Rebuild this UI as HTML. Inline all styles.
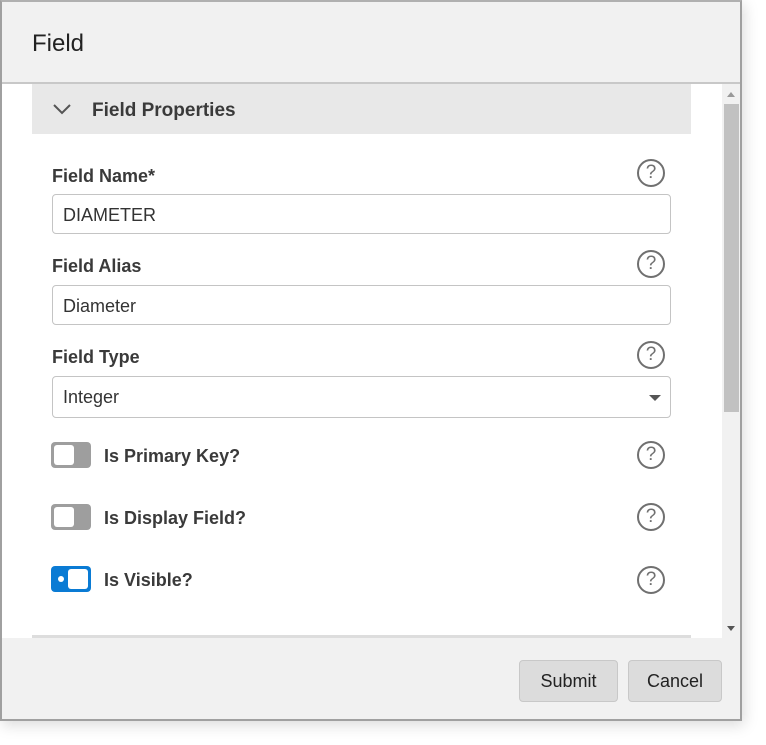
<!DOCTYPE html>
<html><head><style>
*{box-sizing:border-box;margin:0;padding:0}
body{width:766px;height:745px;background:#fff;font-family:"Liberation Sans",sans-serif;position:relative;overflow:hidden;color:#222}
.dlg{position:absolute;left:0;top:0;width:742px;height:721px;border:2px solid #a0a0a0;border-top-color:#b0b0b0;background:#f1f1f1;box-shadow:2px 4px 14px rgba(0,0,0,.15)}
.a{position:absolute}
.lbl{position:absolute;left:52px;font-size:18px;font-weight:bold;color:#3a3a3a}
.inp{position:absolute;left:52px;width:619px;height:40px;border:1px solid #c4c4c4;border-radius:4px;background:#fff;font-size:18px;color:#333;padding:10px 10px}
.q{position:absolute;left:637px;width:28px;height:28px;border:2.5px solid #707070;border-radius:50%;color:#707070;font-size:19px;text-align:center;line-height:23px}
.tg{position:absolute;left:51px;width:40px;height:26px;border-radius:4px;background:#9e9e9e}
.tg i{position:absolute;left:3px;top:3px;width:20px;height:20px;background:#fff;border-radius:3px}
.tg.on{background:#0a7bd4}
.tg.on i{left:17px}
.tg.on b{position:absolute;left:7px;top:10px;width:6px;height:6px;background:#fff;border-radius:50%}
.tl{position:absolute;left:104px;font-size:18px;font-weight:bold;color:#3a3a3a}
.btn{position:absolute;top:660px;height:42px;border:1px solid #c8c8c8;border-radius:4px;background:#dcdcdc;font-size:18px;color:#222;text-align:center;line-height:40px}
</style></head><body>
<div class="dlg"></div>
<div class="a" style="left:32px;top:30px;font-size:24px;color:#222">Field</div>
<div class="a" style="left:2px;top:82px;width:738px;height:2px;background:#c8c8c8"></div>
<div class="a" style="left:2px;top:84px;width:720px;height:554px;background:#fff"></div>
<div class="a" style="left:722px;top:84px;width:18px;height:554px;background:#f1f1f1"></div>
<div class="a" style="left:724px;top:104px;width:15px;height:308px;background:#c1c1c1"></div>
<div class="a" style="left:727px;top:92px;border-left:4px solid transparent;border-right:4px solid transparent;border-bottom:5px solid #999"></div>
<div class="a" style="left:727px;top:626px;border-left:4px solid transparent;border-right:4px solid transparent;border-top:5px solid #555"></div>
<div class="a" style="left:32px;top:84px;width:659px;height:50px;background:#e8e8e8"></div>
<svg class="a" style="left:52px;top:102px" width="20" height="14"><path d="M2 3 L10 11 L18 3" stroke="#555" stroke-width="2" fill="none"/></svg>
<div class="a" style="left:92px;top:100px;font-size:19px;font-weight:bold;color:#3a3a3a">Field Properties</div>
<div class="lbl" style="top:166px">Field Name*</div>
<div class="q" style="top:159px">?</div>
<div class="inp" style="top:194px">DIAMETER</div>
<div class="lbl" style="top:256px">Field Alias</div>
<div class="q" style="top:250px">?</div>
<div class="inp" style="top:285px">Diameter</div>
<div class="lbl" style="top:347px">Field Type</div>
<div class="q" style="top:341px">?</div>
<div class="inp" style="top:376px;height:42px">Integer</div>
<div class="a" style="left:649px;top:395px;border-left:6px solid transparent;border-right:6px solid transparent;border-top:6px solid #555"></div>
<div class="tg" style="top:442px"><i></i></div><div class="tl" style="top:446px">Is Primary Key?</div><div class="q" style="top:441px">?</div>
<div class="tg" style="top:504px"><i></i></div><div class="tl" style="top:508px">Is Display Field?</div><div class="q" style="top:503px">?</div>
<div class="tg on" style="top:566px"><b></b><i></i></div><div class="tl" style="top:570px">Is Visible?</div><div class="q" style="top:566px">?</div>
<div class="a" style="left:32px;top:635px;width:659px;height:3px;background:#ddd"></div>
<div class="btn" style="left:519px;width:99px">Submit</div>
<div class="btn" style="left:628px;width:94px">Cancel</div>
</body></html>
